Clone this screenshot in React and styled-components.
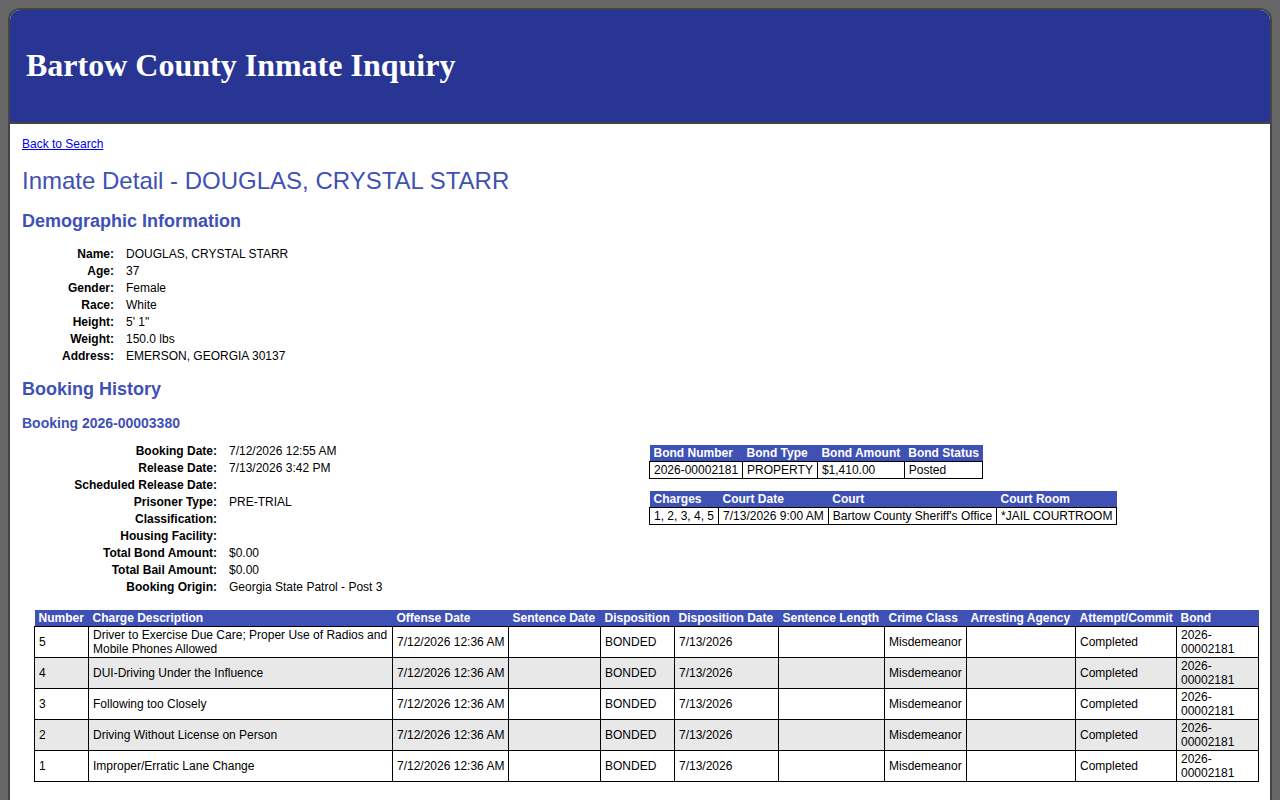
import React from "react";
import styled, { createGlobalStyle } from "styled-components";

const Global = createGlobalStyle`
  html, body { margin: 0; padding: 0; }
  body {
    background: #666666;
    font-family: "Liberation Sans", Arial, sans-serif;
    font-size: 12px;
    color: #000;
  }
`;

const Page = styled.div`
  padding: 8px 8px 0;
`;

const Frame = styled.div`
  background: #fff;
  border: 2px solid #444;
  border-bottom: none;
  border-radius: 12px 12px 0 0;
  overflow: hidden;
`;

const Header = styled.header`
  height: 114px;
  box-sizing: border-box;
  background: #283593;
  border-bottom: 2px solid #444;
  display: flex;
  align-items: center;
  padding: 0 16px 2px;
`;

const SiteTitle = styled.h1`
  margin: 0;
  font-family: "Liberation Serif", "Times New Roman", serif;
  font-size: 32px;
  font-weight: bold;
  color: #fff;
  line-height: 38px;
`;

const Content = styled.main`
  padding: 13px 12px 30px;
`;

const BackLink = styled.a`
  display: block;
  width: max-content;
  font-size: 12px;
  line-height: 14px;
  color: #0000ee;
  text-decoration: underline;
`;

const PageTitle = styled.h2`
  margin: 16px 0 0;
  font-size: 24px;
  line-height: 28px;
  font-weight: normal;
  color: #3f51b5;
`;

const SectionTitle = styled.h3`
  margin: ${(p) => p.$top || 15}px 0 0;
  font-size: 18px;
  line-height: 21px;
  font-weight: bold;
  color: #3f51b5;
`;

const BookingTitle = styled.h4`
  margin: ${(p) => p.$top || 15}px 0 0;
  font-size: 14px;
  line-height: 16px;
  font-weight: bold;
  color: #3f51b5;
`;

const InfoGrid = styled.dl`
  margin: ${(p) => p.$top}px 0 0 12px;
  display: grid;
  grid-template-columns: ${(p) => p.$labelWidth}px 1fr;
  column-gap: 12px;
  grid-auto-rows: 17px;
  align-items: center;
`;

const Label = styled.dt`
  font-weight: bold;
  text-align: right;
  line-height: 14px;
  white-space: nowrap;
`;

const Value = styled.dd`
  margin: 0;
  line-height: 14px;
`;

const BookingRow = styled.div`
  margin: 11px 0 0 12px;
  display: grid;
  grid-template-columns: 1fr 1fr;
`;

const SideTables = styled.div`
  padding: 3px 0 0 3px;
  display: flex;
  flex-direction: column;
  align-items: flex-start;
  gap: 12px;
`;

const Table = styled.table`
  border-collapse: collapse;
  font-size: 12px;
  line-height: 14px;
  ${(p) =>
    p.$full
      ? `width: calc(100% - 12px); margin: 15px 0 0 12px; table-layout: fixed;`
      : ``}
`;

const Col = styled.col`
  width: ${(p) => p.$w}px;
`;

const Th = styled.th`
  background: #3f51b5;
  color: #fff;
  font-weight: bold;
  text-align: left;
  padding: 1px 4px;
  white-space: nowrap;
  overflow: hidden;
  border: none;
`;

const Tr = styled.tr`
  background: ${(p) => (p.$alt ? "#e8e8e8" : "#fff")};
`;

const Td = styled.td`
  border: 1px solid #000;
  padding: 1px 4px;
  vertical-align: middle;
  white-space: ${(p) => (p.$nowrap ? "nowrap" : "normal")};
`;

const demographics = [
  ["Name:", "DOUGLAS, CRYSTAL STARR"],
  ["Age:", "37"],
  ["Gender:", "Female"],
  ["Race:", "White"],
  ["Height:", "5' 1\""],
  ["Weight:", "150.0 lbs"],
  ["Address:", "EMERSON, GEORGIA 30137"],
];

const bookingInfo = [
  ["Booking Date:", "7/12/2026 12:55 AM"],
  ["Release Date:", "7/13/2026 3:42 PM"],
  ["Scheduled Release Date:", ""],
  ["Prisoner Type:", "PRE-TRIAL"],
  ["Classification:", ""],
  ["Housing Facility:", ""],
  ["Total Bond Amount:", "$0.00"],
  ["Total Bail Amount:", "$0.00"],
  ["Booking Origin:", "Georgia State Patrol - Post 3"],
];

const chargeCols = [
  ["Number", 54],
  ["Charge Description", 304],
  ["Offense Date", 116],
  ["Sentence Date", 92],
  ["Disposition", 74],
  ["Disposition Date", 104],
  ["Sentence Length", 106],
  ["Crime Class", 82],
  ["Arresting Agency", 109],
  ["Attempt/Commit", 101],
  ["Bond", 82],
];

const charges = [
  ["5", "Driver to Exercise Due Care; Proper Use of Radios and Mobile Phones Allowed"],
  ["4", "DUI-Driving Under the Influence"],
  ["3", "Following too Closely"],
  ["2", "Driving Without License on Person"],
  ["1", "Improper/Erratic Lane Change"],
];

function Info({ rows, labelWidth, top }) {
  return (
    <InfoGrid $labelWidth={labelWidth} $top={top}>
      {rows.map(([l, v]) => (
        <React.Fragment key={l}>
          <Label>{l}</Label>
          <Value>{v}</Value>
        </React.Fragment>
      ))}
    </InfoGrid>
  );
}

function SmallTable({ heads, row }) {
  return (
    <Table>
      <thead>
        <tr>
          {heads.map((h) => (
            <Th key={h}>{h}</Th>
          ))}
        </tr>
      </thead>
      <tbody>
        <Tr>
          {row.map((c, i) => (
            <Td key={i} $nowrap>
              {c}
            </Td>
          ))}
        </Tr>
      </tbody>
    </Table>
  );
}

function ChargeTable() {
  return (
    <Table $full>
      <colgroup>
        {chargeCols.map(([h, w]) => (
          <Col key={h} $w={w} />
        ))}
      </colgroup>
      <thead>
        <tr>
          {chargeCols.map(([h]) => (
            <Th key={h}>{h}</Th>
          ))}
        </tr>
      </thead>
      <tbody>
        {charges.map(([n, d], i) => (
          <Tr key={n} $alt={i % 2 === 1}>
            <Td>{n}</Td>
            <Td>{d}</Td>
            <Td $nowrap>7/12/2026 12:36 AM</Td>
            <Td></Td>
            <Td>BONDED</Td>
            <Td>7/13/2026</Td>
            <Td></Td>
            <Td>Misdemeanor</Td>
            <Td></Td>
            <Td>Completed</Td>
            <Td>2026-00002181</Td>
          </Tr>
        ))}
      </tbody>
    </Table>
  );
}

export default function App() {
  return (
    <>
      <Global />
      <Page>
        <Frame>
          <Header>
            <SiteTitle>Bartow County Inmate Inquiry</SiteTitle>
          </Header>
          <Content>
            <BackLink href="#">Back to Search</BackLink>
            <PageTitle>Inmate Detail - DOUGLAS, CRYSTAL STARR</PageTitle>
            <SectionTitle $top={16}>Demographic Information</SectionTitle>
            <Info rows={demographics} labelWidth={80} top={13} />
            <SectionTitle>Booking History</SectionTitle>
            <BookingTitle>Booking 2026-00003380</BookingTitle>
            <BookingRow>
              <Info rows={bookingInfo} labelWidth={171} top={0} />
              <SideTables>
                <SmallTable
                  heads={["Bond Number", "Bond Type", "Bond Amount", "Bond Status"]}
                  row={["2026-00002181", "PROPERTY", "$1,410.00", "Posted"]}
                />
                <SmallTable
                  heads={["Charges", "Court Date", "Court", "Court Room"]}
                  row={[
                    "1, 2, 3, 4, 5",
                    "7/13/2026 9:00 AM",
                    "Bartow County Sheriff's Office",
                    "*JAIL COURTROOM",
                  ]}
                />
              </SideTables>
            </BookingRow>
            <ChargeTable />
            <BookingTitle $top={16}>Booking 2026-00003315</BookingTitle>
          </Content>
        </Frame>
      </Page>
    </>
  );
}
